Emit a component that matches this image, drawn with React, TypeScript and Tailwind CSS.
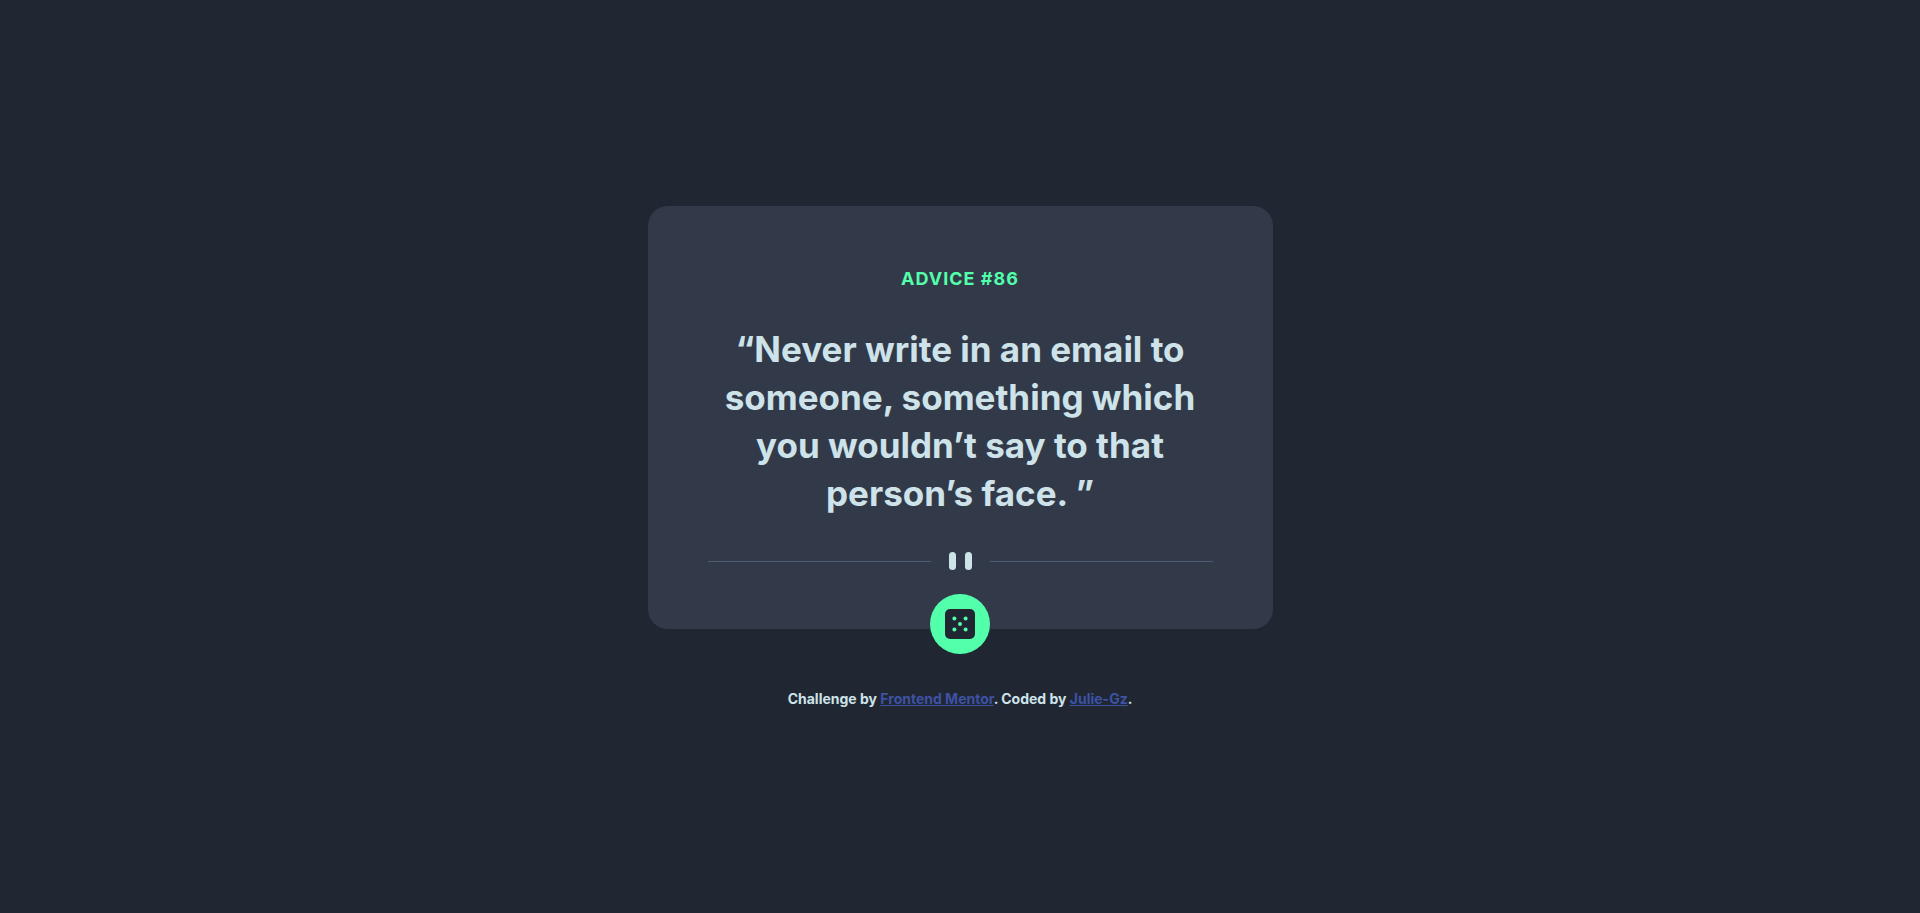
const advice = {
  id: 86,
  text: 'Never write in an email to someone, something which you wouldn’t say to that person’s face. ',
};

function PatternDivider() {
  return (
    <div className="flex items-center" aria-hidden="true">
      <span className="h-px flex-1 bg-[#4f5d74]" />
      <span className="flex gap-[9px] px-[18px]">
        <span className="h-[18px] w-[7px] rounded-full bg-[#cee3e9]" />
        <span className="h-[18px] w-[7px] rounded-full bg-[#cee3e9]" />
      </span>
      <span className="h-px flex-1 bg-[#4f5d74]" />
    </div>
  );
}

function DiceIcon() {
  return (
    <svg width="30" height="30" viewBox="0 0 30 30" aria-hidden="true">
      <rect width="30" height="30" rx="5" fill="#202733" />
      <g fill="#53ffaa">
        <circle cx="9.4" cy="9.4" r="2" />
        <circle cx="20.6" cy="9.4" r="2" />
        <circle cx="15" cy="15" r="2" />
        <circle cx="9.4" cy="20.6" r="2" />
        <circle cx="20.6" cy="20.6" r="2" />
      </g>
    </svg>
  );
}

export default function App() {
  return (
    <div className="flex min-h-screen flex-col items-center justify-center bg-[#202733] px-4 font-['Inter',sans-serif] font-bold text-[#cee3e9]">
      <main className="flex w-full max-w-[625px] flex-col items-center">
        <section className="w-full rounded-[20px] bg-[#323a49] px-[60px] pt-[61px] pb-[59px] text-center">
          <h1 className="text-[18px] leading-6 tracking-[1px] text-[#53ffaa] uppercase">Advice #{advice.id}</h1>
          <p className="mt-[34px] mb-[35px] text-[35px] leading-12">{`“${advice.text}”`}</p>
          <PatternDivider />
        </section>
        <button type="button" aria-label="New advice" className="-mt-[35px] flex size-[60px] cursor-pointer items-center justify-center rounded-full bg-[#53ffaa]">
          <DiceIcon />
        </button>
      </main>
      <footer className="mt-[37px] text-center text-[14px] leading-4">
        Challenge by{' '}
        <a href="https://www.frontendmentor.io" className="text-[#3e52a3] underline">Frontend Mentor</a>. Coded by{' '}
        <a href="https://github.com" className="text-[#3e52a3] underline">Julie-Gz</a>.
      </footer>
    </div>
  );
}
